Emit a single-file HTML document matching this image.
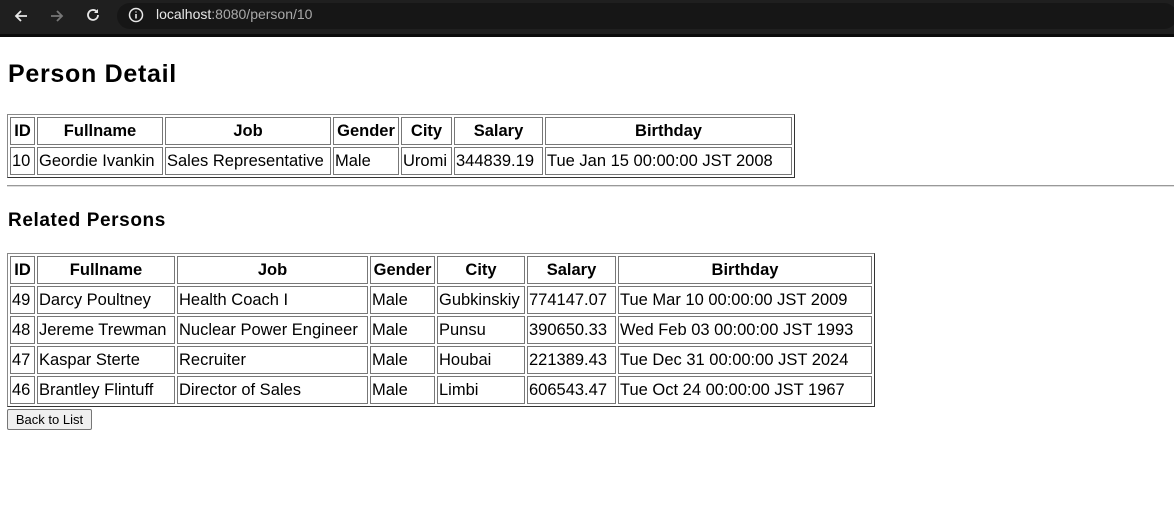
<!DOCTYPE html>
<html><head><meta charset="utf-8"><style>
*{margin:0;padding:0}
body{width:1174px;height:519px;overflow:hidden;background:#fff;font-family:"Liberation Sans","Noto Sans CJK JP",sans-serif;color:#000;position:relative}
.bar{position:absolute;left:0;top:0;width:1174px;height:34px;background:#1f1f1f;border-bottom:3px solid #0b0b0b}
.url{position:absolute;left:117px;top:3px;width:1060px;height:26px;border-radius:14px;background:#161616}
.bar span{position:absolute;top:6px;font-size:14px;color:#aaa}
h1{position:absolute;left:8px;top:60px;font-size:25px;font-weight:bold;letter-spacing:0.7px}
h3{position:absolute;left:8px;top:210px;font-size:19px;font-weight:bold;letter-spacing:0.6px}
table{position:absolute;left:7px;border:1px solid #888;border-right-color:#333;border-bottom-color:#333;border-spacing:2px;table-layout:fixed;font-size:16.5px}
td,th{border:1px solid #777;height:28px;padding:0 1px;white-space:nowrap;overflow:hidden;box-sizing:border-box}
th{font-weight:bold;text-align:center}
hr{position:absolute;left:7px;top:185px;width:1167px;border:0;border-top:1px solid #999;border-bottom:1px solid #ddd}
button{position:absolute;left:7px;top:409px;width:85px;height:21px;font-size:13px;font-family:"Liberation Sans",sans-serif;background:#efefef;border:1px solid #767676;border-radius:2px}
</style></head><body>
<div class="bar">
<svg style="position:absolute;left:13px;top:8px" width="16" height="16" viewBox="0 0 16 16"><path d="M14 8H3M8 3L3 8l5 5" stroke="#e8e8e8" stroke-width="1.8" fill="none"/></svg>
<svg style="position:absolute;left:49px;top:8px" width="16" height="16" viewBox="0 0 16 16"><path d="M2 8h11M8 3l5 5-5 5" stroke="#777" stroke-width="1.8" fill="none"/></svg>
<svg style="position:absolute;left:85px;top:7px" width="16" height="16" viewBox="0 0 16 16"><path d="M13 8a5 5 0 1 1-1.5-3.6" stroke="#e8e8e8" stroke-width="1.8" fill="none"/><path d="M13 2v4H9z" fill="#e8e8e8"/></svg>
<div class="url"></div>
<svg style="position:absolute;left:128px;top:7px" width="16" height="16" viewBox="0 0 16 16"><circle cx="8" cy="8" r="6.5" stroke="#e8e8e8" stroke-width="1.5" fill="none"/><path d="M8 7v4.5M8 4.5v1" stroke="#e8e8e8" stroke-width="1.6"/></svg>
<span style="left:156px"><b style="color:#e8e8e8;font-weight:normal">localhost</b>:8080/person/10</span>
</div>
<h1>Person Detail</h1>
<table style="top:114px;width:788px">
<colgroup><col style="width:25px"><col style="width:126px"><col style="width:166px"><col style="width:66px"><col style="width:51px"><col style="width:89px"><col style="width:247px"></colgroup>
<tr><th>ID</th><th>Fullname</th><th>Job</th><th>Gender</th><th>City</th><th>Salary</th><th>Birthday</th></tr>
<tr><td>10</td><td>Geordie Ivankin</td><td>Sales Representative</td><td>Male</td><td>Uromi</td><td>344839.19</td><td>Tue Jan 15 00:00:00 JST 2008</td></tr>
</table>
<hr>
<h3>Related Persons</h3>
<table style="top:253px;width:868px">
<colgroup><col style="width:25px"><col style="width:138px"><col style="width:191px"><col style="width:65px"><col style="width:88px"><col style="width:89px"><col style="width:254px"></colgroup>
<tr><th>ID</th><th>Fullname</th><th>Job</th><th>Gender</th><th>City</th><th>Salary</th><th>Birthday</th></tr>
<tr><td>49</td><td>Darcy Poultney</td><td>Health Coach I</td><td>Male</td><td>Gubkinskiy</td><td>774147.07</td><td>Tue Mar 10 00:00:00 JST 2009</td></tr>
<tr><td>48</td><td>Jereme Trewman</td><td>Nuclear Power Engineer</td><td>Male</td><td>Punsu</td><td>390650.33</td><td>Wed Feb 03 00:00:00 JST 1993</td></tr>
<tr><td>47</td><td>Kaspar Sterte</td><td>Recruiter</td><td>Male</td><td>Houbai</td><td>221389.43</td><td>Tue Dec 31 00:00:00 JST 2024</td></tr>
<tr><td>46</td><td>Brantley Flintuff</td><td>Director of Sales</td><td>Male</td><td>Limbi</td><td>606543.47</td><td>Tue Oct 24 00:00:00 JST 1967</td></tr>
</table>
<button>Back to List</button>
</body></html>
